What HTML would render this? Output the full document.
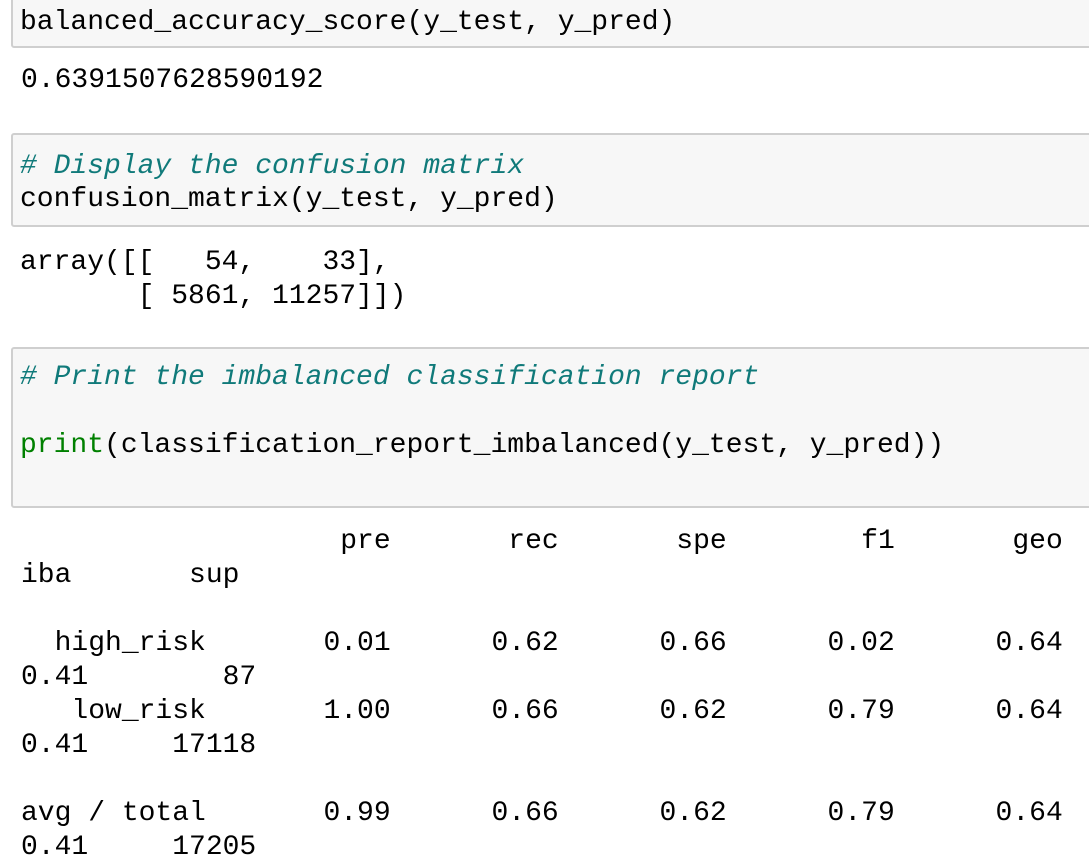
<!DOCTYPE html>
<html><head><style>
html,body{margin:0;padding:0;background:#fff;width:1089px;height:868px;overflow:hidden;position:relative}
.box{position:absolute;left:11px;width:1100px;background:#f7f7f7;border:2px solid #cfcfcf;border-radius:3px;box-sizing:border-box}
.l{position:absolute;left:20px;font-family:"Liberation Mono",monospace;font-size:28px;line-height:34px;white-space:pre;color:#000}
.o{left:21px}
.c{color:#107a7a;font-style:italic}
.g{color:#008000}
</style></head><body>
<div class="box" style="top:-10px;height:58px"></div>
<div class="box" style="top:133px;height:94px"></div>
<div class="box" style="top:347px;height:161px"></div>

<div class="l" style="top:6px">balanced_accuracy_score(y_test, y_pred)</div>
<div class="l o" style="top:64px">0.6391507628590192</div>

<div class="l c" style="top:150px"># Display the confusion matrix</div>
<div class="l" style="top:183px">confusion_matrix(y_test, y_pred)</div>

<div class="l" style="top:246px">array([[   54,    33],
       [ 5861, 11257]])</div>

<div class="l c" style="top:361px"># Print the imbalanced classification report</div>
<div class="l" style="top:429px"><span class="g">print</span>(classification_report_imbalanced(y_test, y_pred))</div>

<div class="l o" style="top:525px">                   pre       rec       spe        f1       geo
iba       sup

  high_risk       0.01      0.62      0.66      0.02      0.64
0.41        87
   low_risk       1.00      0.66      0.62      0.79      0.64
0.41     17118

avg / total       0.99      0.66      0.62      0.79      0.64
0.41     17205</div>
</body></html>
